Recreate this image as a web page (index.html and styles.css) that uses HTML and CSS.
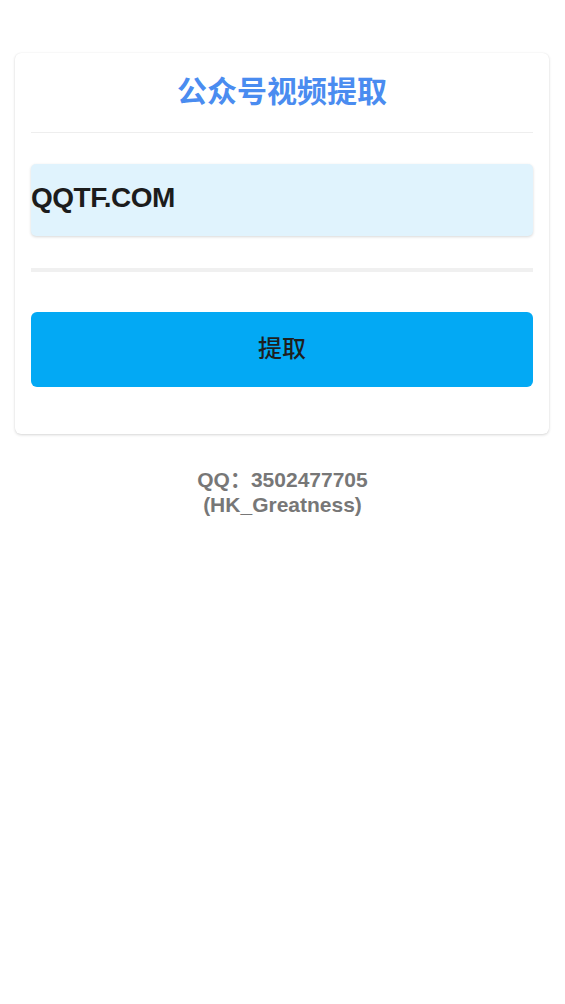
FILE: index.html
```html
<!DOCTYPE html>
<html lang="zh">
<head>
<meta charset="utf-8">
<meta name="viewport" content="width=device-width, initial-scale=1">
<title>公众号视频提取</title>
<link rel="stylesheet" href="styles.css">
</head>
<body>
<div class="card">
  <h1 class="title">公众号视频提取</h1>
  <div class="divider"></div>
  <input class="url-input" type="text" value="QQTF.COM">
  <div class="progress"></div>
  <button class="submit" type="button">提取</button>
</div>
<div class="footer">
  <div>QQ：3502477705</div>
  <div>(HK_Greatness)</div>
</div>
</body>
</html>
```
FILE: styles.css
```css
* { box-sizing: border-box; }
html, body { margin: 0; padding: 0; background: #fff; }
body {
  font-family: "Liberation Sans", "Noto Sans CJK SC", sans-serif;
}
.card {
  margin: 53px 16px 0 15px;
  padding: 16px 16px 47px;
  background: #fff;
  border-radius: 6px;
  box-shadow: 0 1px 3px rgba(0,0,0,0.16), 0 0 1px rgba(0,0,0,0.08);
  display: flex;
  flex-direction: column;
}
.title {
  margin: 0;
  text-align: center;
  font-family: "Noto Sans CJK SC", sans-serif;
  font-size: 30px;
  line-height: 40px;
  font-weight: 700;
  color: #4a8cf0;
}
.divider {
  height: 1px;
  background: #eeeeee;
  margin-top: 23px;
}
.url-input {
  margin-top: 31px;
  height: 72px;
  width: 100%;
  border: none;
  outline: none;
  padding: 0 0 4px 0;
  background: #e0f3fd;
  border-radius: 5px;
  box-shadow: 0 1px 3px rgba(0,0,0,0.16);
  font-family: "Liberation Sans", sans-serif;
  font-weight: 700;
  font-size: 28px;
  color: #1c1c1c;
  letter-spacing: -0.5px;
}
.progress {
  margin-top: 32px;
  height: 4px;
  background: #f0f0f0;
}
.submit {
  margin-top: 40px;
  height: 75px;
  width: 100%;
  border: none;
  border-radius: 6px;
  background: #03a9f4;
  color: #1e1e1e;
  font-family: "Noto Sans CJK SC", sans-serif;
  font-size: 24px;
  font-weight: 500;
  padding: 0 0 7px 0;
}
.footer {
  margin-top: 33px;
  text-align: center;
  color: #777777;
  font-weight: 700;
  font-size: 21px;
  line-height: 25px;
}
```
